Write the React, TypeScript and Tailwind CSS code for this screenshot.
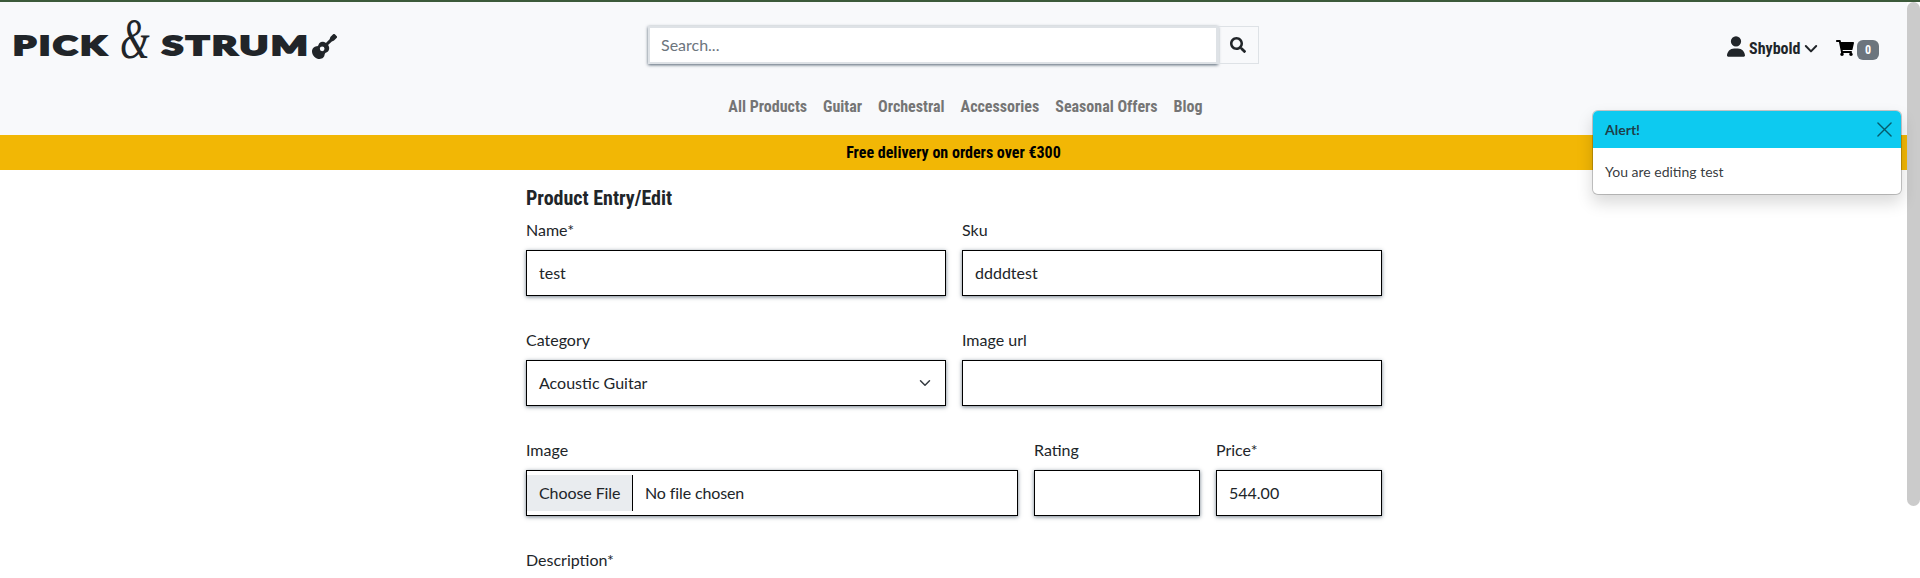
import type { ReactNode } from "react";
import { FaSearch, FaShoppingCart, FaGuitar } from "react-icons/fa";
import { FaUser } from "react-icons/fa6";

const condensed = "font-['Roboto_Condensed',Roboto,sans-serif] [font-stretch:75%]";
const field =
  "h-[46px] w-full border border-black bg-white px-3 flex items-center shadow-[0_1px_4px_rgba(52,71,88,0.7)]";

function Field({ label, children, className = "" }: { label: string; children?: ReactNode; className?: string }) {
  return (
    <div className={className}>
      <div className="mb-2 h-6 leading-6">{label}</div>
      {children}
    </div>
  );
}

const nav = ["All Products", "Guitar", "Orchestral", "Accessories", "Seasonal Offers", "Blog"];

export default function App() {
  return (
    <div className="flex h-[578px] w-full overflow-hidden border-t-2 border-[#3c5a3a] bg-white font-[Lato,sans-serif] text-base text-[#212529]">
      <div className="relative flex w-[1907px] flex-col">
        <header className="h-[133px] shrink-0 bg-[#f8f9fb]">
          <div className="flex h-[84px] items-start">
            <div className="flex h-[84px] w-[648px] items-start pl-[13px] pt-[13px] text-[26px] font-black leading-[60px] whitespace-nowrap">
              <span className="w-[107px]"><span className="inline-block origin-left scale-x-[1.42] tracking-[2px] [-webkit-text-stroke:2px_#212529]">PICK</span></span>
              <span className="w-[42px] font-['Liberation_Serif',serif] text-[56px] leading-[48px] font-normal"><span className="inline-block origin-left scale-x-[0.68] italic">&amp;</span></span>
              <span className="w-[150px]"><span className="inline-block origin-left scale-x-[1.48] tracking-[1.9px] [-webkit-text-stroke:2px_#212529]">STRUM</span></span>
              <FaGuitar className="mt-[19px] size-[25px]" />
            </div>
            <div className="mt-6 flex h-[38px] w-[611px]">
              <div className="h-[38px] w-[570px] border-2 border-[#dee2e6] bg-white px-[11px] leading-[34px] text-[#6c757d] shadow-[0_1px_3px_rgba(52,71,88,0.85)]">Search...</div>
              <div className="flex flex-1 items-center justify-center border border-[#dee2e6] pr-px"><FaSearch className="size-4" /></div>
            </div>
            <div className={`flex flex-1 items-start pl-[468px] pt-[34px] font-bold ${condensed}`}>
              <FaUser className="h-[21px] w-[18px]" />
              <span className="ml-1 w-[55px] leading-[26px] whitespace-nowrap">Shybold</span>
              <svg viewBox="0 0 14 10" className="mt-[8px] h-[10px] w-[14px]" fill="none" stroke="currentColor" strokeWidth="2" strokeLinecap="round" strokeLinejoin="round"><path d="m1.8 2 5.2 5.4L12.2 2" /></svg>
              <FaShoppingCart className="mt-[4px] ml-[18px] h-4 w-[18px] text-black" />
              <span className="mt-[4px] ml-[3px] flex h-5 w-[22px] items-center justify-center rounded-md bg-[#6c757d] text-xs text-white">0</span>
            </div>
          </div>
          <nav className={`flex justify-center gap-4 leading-[42px] font-bold text-[#757575] ${condensed} pl-6`}>
            {nav.map((n) => <span key={n}>{n}</span>)}
          </nav>
        </header>
        <div className={`h-[35px] shrink-0 bg-[#f2b705] text-center font-bold leading-[35px] text-black ${condensed}`}>Free delivery on orders over €300</div>
        <main className="ml-[526px] w-[856px] pt-4">
          <h1 className={`mb-2 h-6 text-xl leading-6 font-bold ${condensed}`}>Product Entry/Edit</h1>
          <div className="flex flex-col gap-8">
            <div className="flex gap-4">
              <Field label="Name*" className="flex-1"><div className={field}>test</div></Field>
              <Field label="Sku" className="flex-1"><div className={field}>ddddtest</div></Field>
            </div>
            <div className="flex gap-4">
              <Field label="Category" className="flex-1">
                <div className={`${field} justify-between`}>Acoustic Guitar
                  <svg viewBox="0 0 16 16" className="mr-0.5 size-3" fill="none" stroke="#343a40" strokeWidth="2" strokeLinecap="round" strokeLinejoin="round"><path d="m2 5 6 6 6-6" /></svg>
                </div>
              </Field>
              <Field label="Image url" className="flex-1"><div className={field} /></Field>
            </div>
            <div className="flex gap-4">
              <Field label="Image" className="w-[492px]">
                <div className={field}>
                  <span className="-ml-3 mr-3 h-9 w-[106px] shrink-0 border-r border-black bg-[#e9ecef] pl-3 leading-9 tracking-[-0.08px] whitespace-nowrap">Choose File</span>
                  <span className="tracking-[-0.12px]">No file chosen</span>
                </div>
              </Field>
              <Field label="Rating" className="w-[166px]"><div className={field} /></Field>
              <Field label="Price*" className="w-[166px]"><div className={field}>544.00</div></Field>
            </div>
            <Field label="Description*" />
          </div>
        </main>
        <div className="absolute left-[1592px] top-[108px] h-[85px] w-[310px] overflow-hidden rounded-md border border-black/20 bg-white bg-clip-padding text-sm shadow-[0_8px_16px_rgba(0,0,0,0.15)]">
          <div className="flex h-[37px] items-center justify-between bg-[#0dcaf0] pl-3 pr-[9px]">
            <strong className="text-[#212529]/85">Alert!</strong>
            <svg viewBox="0 0 16 16" className="size-[15px]" fill="none" stroke="black" strokeOpacity="0.55" strokeWidth="1.5" strokeLinecap="round"><path d="m1 1 14 14M15 1 1 15" /></svg>
          </div>
          <div className="px-3 pt-[13px] leading-[21px] text-[#212529]/90">You are editing test</div>
        </div>
      </div>
      <div className="h-[504px] w-[13px] rounded-full bg-[#cbcbcb]" />
    </div>
  );
}
